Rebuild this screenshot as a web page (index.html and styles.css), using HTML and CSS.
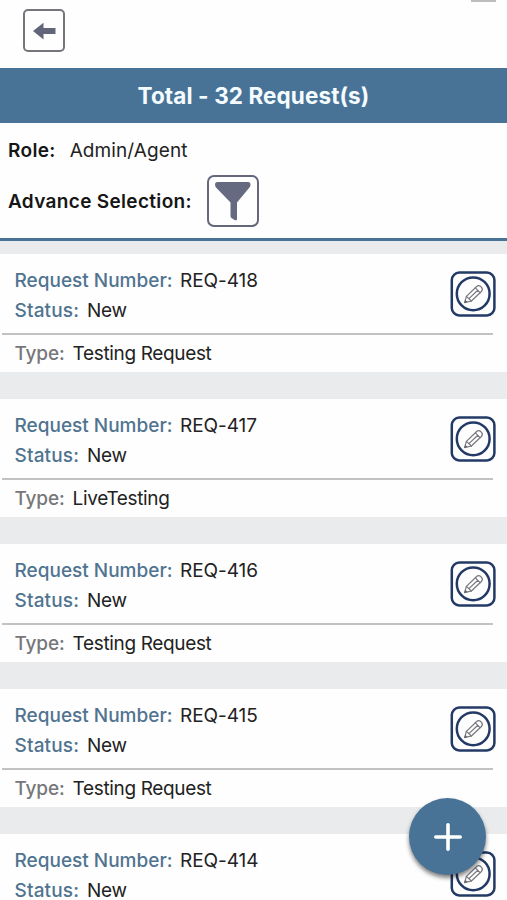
FILE: index.html
```html
<!DOCTYPE html>
<html lang="en">
<head>
<meta charset="utf-8">
<title>Requests</title>
<link rel="stylesheet" href="styles.css">
</head>
<body>
<svg width="0" height="0" class="defs" aria-hidden="true">
  <symbol id="edit" viewBox="0 0 46 46">
    <rect x="1.8" y="1.6" width="42.6" height="42.8" rx="7.5" fill="#fefefe" stroke="#243a66" stroke-width="2.5"/>
    <circle cx="23.2" cy="22.8" r="16.4" fill="none" stroke="#243a66" stroke-width="2.5"/>
    <g fill="none" stroke="#77777d" stroke-width="1.2" stroke-linejoin="round" stroke-linecap="round">
      <path d="M14.6 31.7 16.4 25.4 26.4 15.7Q28.6 13.6 31 15.8L31.3 16.2Q33.4 18.4 31.4 20.5L21.4 30Z"/>
      <path d="M16.4 25.4 21.4 30M25.4 16.9 30.1 21.6M18.9 27.6 27.8 19.3"/>
    </g>
    <path d="M14.2 32.1 15.2 28.7 17.7 31.1Z" fill="#66666d"/>
  </symbol>
</svg>
<div class="screen">
  <header class="topbar">
    <button class="back" aria-label="Back">
      <svg width="24" height="18" viewBox="0 0 24 18"><path d="M1 9 11.5 .7V5.9H23.5V12.1H11.5V17.4Z" fill="#62647a"/></svg>
    </button>
    <span class="handle"></span>
  </header>
  <h1 class="banner"><span>Total - 32 Request(s)</span></h1>
  <section class="filters">
    <p class="role"><b>Role:</b><span class="role-name">Admin/Agent</span></p>
    <div class="advance"><b>Advance Selection:</b>
      <button class="funnel" aria-label="Filter">
        <svg width="36" height="40" viewBox="0 0 36 40"><path d="M2.5 1H33Q35.5 1 35.5 3.5 35.5 5.5 34 7L22 21.5V38Q22 40 19.5 39L16.5 37Q15.5 36.5 15.5 34.5V21.5L1.5 7Q0 5.5 0 3.5 0 1 2.5 1Z" fill="#666a80"/></svg>
      </button>
    </div>
  </section>
  <main class="list">
    <article class="card">
      <div class="head"><div><p><b>Request Number:</b><span class="num">REQ-418</span></p><p><b>Status:</b><span class="status">New</span></p></div><svg class="edit"><use href="#edit"/></svg></div>
      <p class="type"><b>Type:</b><span>Testing Request</span></p>
    </article>
    <article class="card">
      <div class="head"><div><p><b>Request Number:</b><span class="num">REQ-417</span></p><p><b>Status:</b><span class="status">New</span></p></div><svg class="edit"><use href="#edit"/></svg></div>
      <p class="type"><b>Type:</b><span>LiveTesting</span></p>
    </article>
    <article class="card">
      <div class="head"><div><p><b>Request Number:</b><span class="num">REQ-416</span></p><p><b>Status:</b><span class="status">New</span></p></div><svg class="edit"><use href="#edit"/></svg></div>
      <p class="type"><b>Type:</b><span>Testing Request</span></p>
    </article>
    <article class="card">
      <div class="head"><div><p><b>Request Number:</b><span class="num">REQ-415</span></p><p><b>Status:</b><span class="status">New</span></p></div><svg class="edit"><use href="#edit"/></svg></div>
      <p class="type"><b>Type:</b><span>Testing Request</span></p>
    </article>
    <article class="card">
      <div class="head"><div><p><b>Request Number:</b><span class="num">REQ-414</span></p><p><b>Status:</b><span class="status">New</span></p></div><svg class="edit"><use href="#edit"/></svg></div>
    </article>
  </main>
  <button class="fab" aria-label="Add request">
    <svg width="28" height="28" viewBox="0 0 28 28"><path d="M14 1.8V26.2M1.8 14H26.2" stroke="#fff" stroke-width="3.6" stroke-linecap="round"/></svg>
  </button>
</div>
</body>
</html>
```
FILE: styles.css
```css
* { box-sizing: border-box; }
body { margin: 0; font-family: Inter, "Liberation Sans", sans-serif; font-size: 19px; color: #222; background: #fefefe; }
p, h1 { margin: 0; }
button { padding: 0; background: #fefefe; display: flex; align-items: center; justify-content: center; }
.defs { position: absolute; }
.screen { position: relative; height: 900px; overflow: hidden; }
.topbar { height: 68px; padding: 9px 11px 0 23px; display: flex; justify-content: space-between; align-items: flex-start; }
.back { width: 42px; height: 43px; border: 2px solid #77757b; border-radius: 5px; }
.handle { width: 25px; height: 2px; margin-top: -9px; background: #bdbdbd; }
.banner { height: 55px; background: #487396; color: #f5fcff; font-size: 22.5px; font-weight: 700; line-height: 56px; letter-spacing: .1px; text-align: center; white-space: nowrap; }
.filters { height: 118px; padding: 13px 8px 0; border-bottom: 3px solid #487396; }
.filters b { font-weight: 600; color: #161616; letter-spacing: .33px; }
.role { height: 30px; line-height: 30px; display: flex; gap: 14px; }
.role-name { letter-spacing: .1px; }
.advance { margin-top: 8px; height: 54px; display: flex; align-items: center; gap: 15px; white-space: nowrap; }
.funnel { width: 52px; height: 52px; border: 2px solid #66677a; border-radius: 7px; }
.list { background: #e9ebed; padding-top: 13px; display: flex; flex-direction: column; gap: 27px; }
.card { height: 118px; flex: none; background: #fefefe; }
.head { height: 81px; margin: 0 14px 0 2px; padding: 12px 0 0 12.5px; border-bottom: 2px solid #c2c2c4; display: flex; justify-content: space-between; }
.head p { height: 30px; line-height: 30px; display: flex; gap: 8px; white-space: nowrap; }
.head b { font-weight: 500; color: #507490; }
.head .num { letter-spacing: -.05px; margin-left: -.5px; }
.head p + p b { letter-spacing: .15px; }
.head .status { letter-spacing: -.3px; }
.edit { width: 46px; height: 46px; margin: 5px -3px 0 0; flex: none; }
.type { padding-left: 14.5px; line-height: 37px; display: flex; gap: 8px; }
.type b { font-weight: 500; color: #77777a; letter-spacing: -.15px; }
.type span { letter-spacing: -.35px; }
.fab { position: absolute; left: 409px; top: 798px; width: 77px; height: 77px; border: 0; border-radius: 50%; background: #487396; box-shadow: 0 3px 4px rgba(0,0,0,.5); }
```
